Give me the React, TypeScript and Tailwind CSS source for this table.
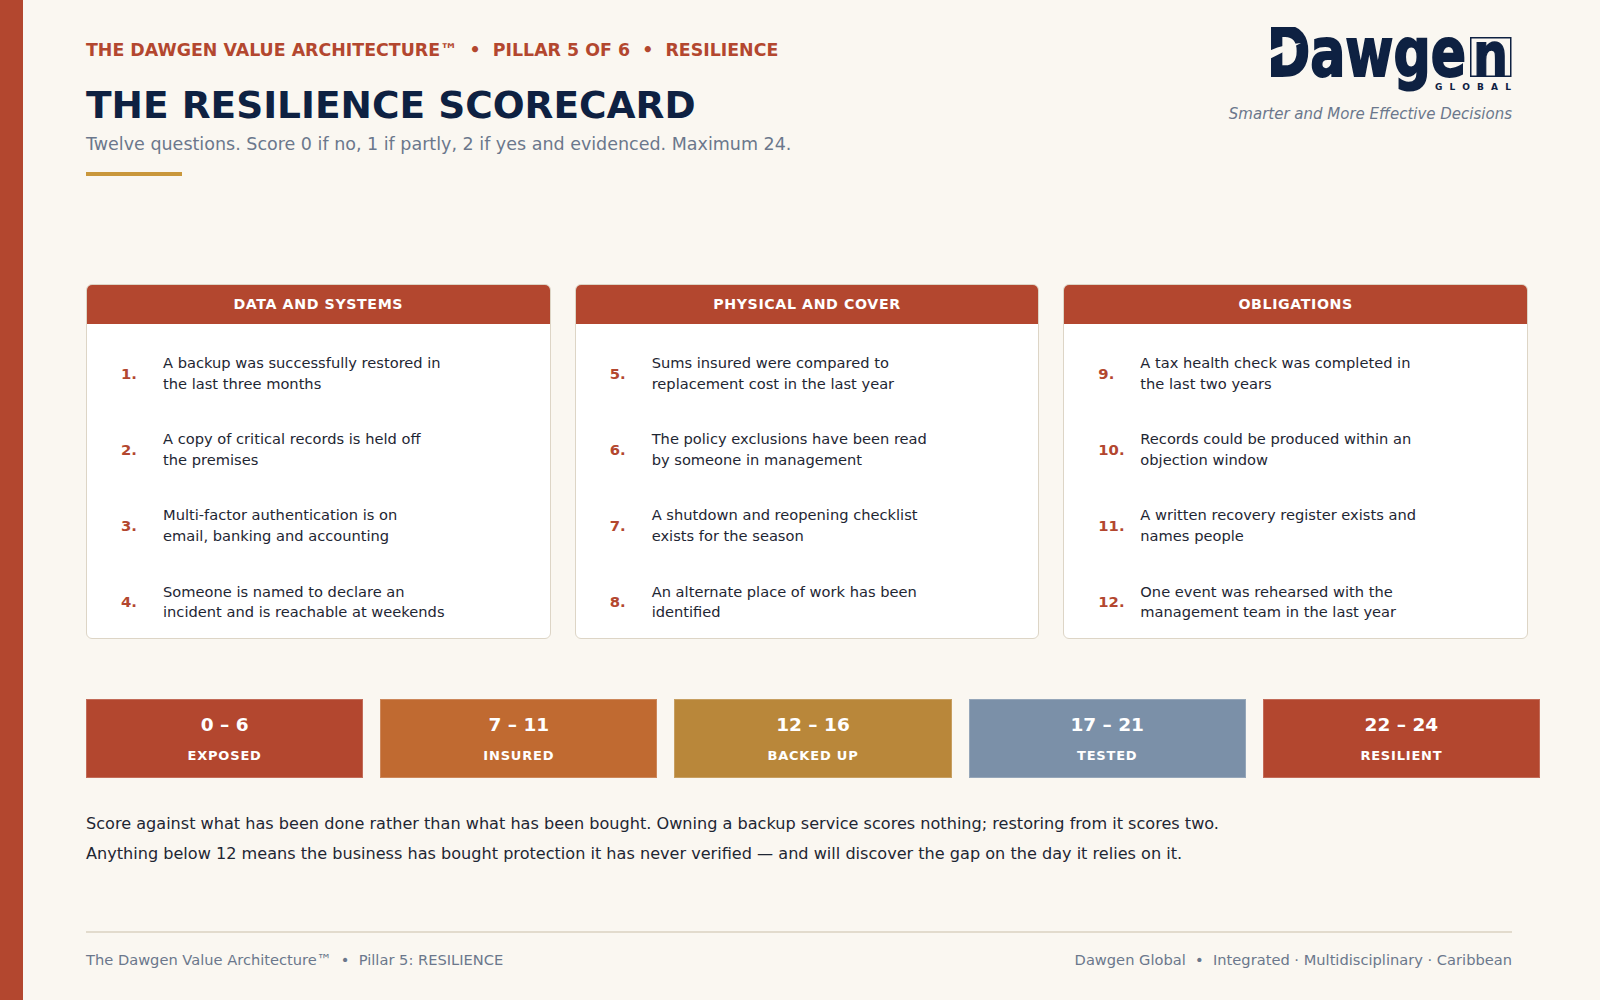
import React from 'react';

interface Question {
  n: number;
  text: string[];
}

interface Pillar {
  title: string;
  questions: Question[];
}

interface Band {
  range: string;
  label: string;
  color: string;
}

const pillars: Pillar[] = [
  {
    title: 'DATA AND SYSTEMS',
    questions: [
      { n: 1, text: ['A backup was successfully restored in', 'the last three months'] },
      { n: 2, text: ['A copy of critical records is held off', 'the premises'] },
      { n: 3, text: ['Multi-factor authentication is on', 'email, banking and accounting'] },
      { n: 4, text: ['Someone is named to declare an', 'incident and is reachable at weekends'] },
    ],
  },
  {
    title: 'PHYSICAL AND COVER',
    questions: [
      { n: 5, text: ['Sums insured were compared to', 'replacement cost in the last year'] },
      { n: 6, text: ['The policy exclusions have been read', 'by someone in management'] },
      { n: 7, text: ['A shutdown and reopening checklist', 'exists for the season'] },
      { n: 8, text: ['An alternate place of work has been', 'identified'] },
    ],
  },
  {
    title: 'OBLIGATIONS',
    questions: [
      { n: 9, text: ['A tax health check was completed in', 'the last two years'] },
      { n: 10, text: ['Records could be produced within an', 'objection window'] },
      { n: 11, text: ['A written recovery register exists and', 'names people'] },
      { n: 12, text: ['One event was rehearsed with the', 'management team in the last year'] },
    ],
  },
];

const bands: Band[] = [
  { range: '0 – 6', label: 'EXPOSED', color: 'bg-[#b3472f]' },
  { range: '7 – 11', label: 'INSURED', color: 'bg-[#c06a31]' },
  { range: '12 – 16', label: 'BACKED UP', color: 'bg-[#b9873a]' },
  { range: '17 – 21', label: 'TESTED', color: 'bg-[#7b90a8]' },
  { range: '22 – 24', label: 'RESILIENT', color: 'bg-[#b3472f]' },
];

const DawgenLogo: React.FC = () => (
  <svg width="246" height="72" viewBox="0 0 246 72" fill="none">
    <text
      x="1"
      y="49"
      fill="#0e2142"
      stroke="#0e2142"
      strokeWidth="2"
      fontFamily="DejaVu Sans, sans-serif"
      fontWeight="700"
      fontSize="67"
      textLength="199"
      lengthAdjust="spacingAndGlyphs"
    >
      Dawge
    </text>
    {/* swoosh cutting the D */}
    <path d="M-1 26 C 10 20, 22 17, 35 16 C 23 22, 12 28, -1 34 Z" fill="#faf7f1" />
    <rect x="204.75" y="10.75" width="40" height="38.5" stroke="#0e2142" strokeWidth="1.5" />
    <text
      x="207"
      y="49"
      fill="#0e2142"
      stroke="#0e2142"
      strokeWidth="1.5"
      fontFamily="DejaVu Sans, sans-serif"
      fontWeight="700"
      fontSize="60"
      textLength="35"
      lengthAdjust="spacingAndGlyphs"
    >
      n
    </text>
    <text
      x="169"
      y="63"
      fill="#0e2142"
      fontFamily="DejaVu Sans, sans-serif"
      fontWeight="700"
      fontSize="9"
      textLength="76"
      lengthAdjust="spacing"
    >
      GLOBAL
    </text>
  </svg>
);

const App: React.FC = () => {
  return (
    <div className="min-h-screen w-full flex bg-[#faf7f1] font-['DejaVu_Sans',sans-serif]">
      <div className="w-[23px] shrink-0 bg-[#b3472f]" />

      <div className="flex-1 min-w-0 pl-[63px] pr-[88px] pt-[27px]">
        {/* header */}
        <div className="flex justify-between items-start">
          <div className="pt-[11px]">
            <div className="text-[17.4px] leading-[24px] font-bold text-[#b3472f] whitespace-pre">
              {'THE DAWGEN VALUE ARCHITECTURE™  •  PILLAR 5 OF 6  •  RESILIENCE'}
            </div>
            <h1 className="mt-[20px] text-[37.5px] leading-[46px] font-bold text-[#0e2142]">
              THE RESILIENCE SCORECARD
            </h1>
            <p className="mt-[4px] text-[17.5px] leading-[24px] text-[#6b778c]">
              Twelve questions. Score 0 if no, 1 if partly, 2 if yes and evidenced. Maximum 24.
            </p>
            <div className="mt-[16px] w-[96px] h-[4px] bg-[#c9973b]" />
          </div>

          <div className="flex flex-col items-end">
            <DawgenLogo />
            <div className="mt-[5px] text-[15px] leading-[20px] italic text-[#6b778c]">
              Smarter and More Effective Decisions
            </div>
          </div>
        </div>

        {/* pillar cards */}
        <div className="mt-[108px] w-[1442px] grid grid-cols-3 gap-6">
          {pillars.map((p) => (
            <div
              key={p.title}
              className="h-[355px] bg-white border border-[#ddd5c6] rounded-md overflow-hidden flex flex-col"
            >
              <div className="h-[39px] shrink-0 bg-[#b3472f] flex items-center justify-center text-white text-[14.2px] font-bold tracking-[0.6px]">
                {p.title}
              </div>
              <div className="flex flex-col gap-[35px] pt-[29px] pl-[34px]">
                {p.questions.map((q) => (
                  <div key={q.n} className="flex items-center">
                    <div className="w-[42px] shrink-0 text-[14.8px] font-bold text-[#b3472f]">{q.n}.</div>
                    <div className="text-[14.65px] leading-[20.6px] text-[#1e2633]">
                      {q.text.map((line) => (
                        <div key={line}>{line}</div>
                      ))}
                    </div>
                  </div>
                ))}
              </div>
            </div>
          ))}
        </div>

        {/* score bands */}
        <div className="mt-[60px] w-[1454px] grid grid-cols-5 gap-[17px]">
          {bands.map((b) => (
            <div
              key={b.label}
              className={`${b.color} h-[79px] flex flex-col items-center text-white border border-white/20`}
            >
              <div className="mt-[12px] text-[18.5px] leading-[26px] font-bold">{b.range}</div>
              <div className="mt-[9px] text-[13px] leading-[18px] font-bold tracking-[0.8px]">{b.label}</div>
            </div>
          ))}
        </div>

        {/* note */}
        <div className="mt-[31px] text-[16.1px] leading-[30px] text-[#1e2633]">
          <p>
            Score against what has been done rather than what has been bought. Owning a backup service scores
            nothing; restoring from it scores two.
          </p>
          <p>
            Anything below 12 means the business has bought protection it has never verified — and will discover
            the gap on the day it relies on it.
          </p>
        </div>

        {/* footer */}
        <div className="mt-[62px] border-t-2 border-[#e2dbcd] pt-[15px] flex justify-between text-[14.65px] leading-[24px] text-[#6b778c]">
          <span className="whitespace-pre">{'The Dawgen Value Architecture™  •  Pillar 5: RESILIENCE'}</span>
          <span className="whitespace-pre">{'Dawgen Global  •  Integrated · Multidisciplinary · Caribbean'}</span>
        </div>
      </div>
    </div>
  );
};

export default App;
